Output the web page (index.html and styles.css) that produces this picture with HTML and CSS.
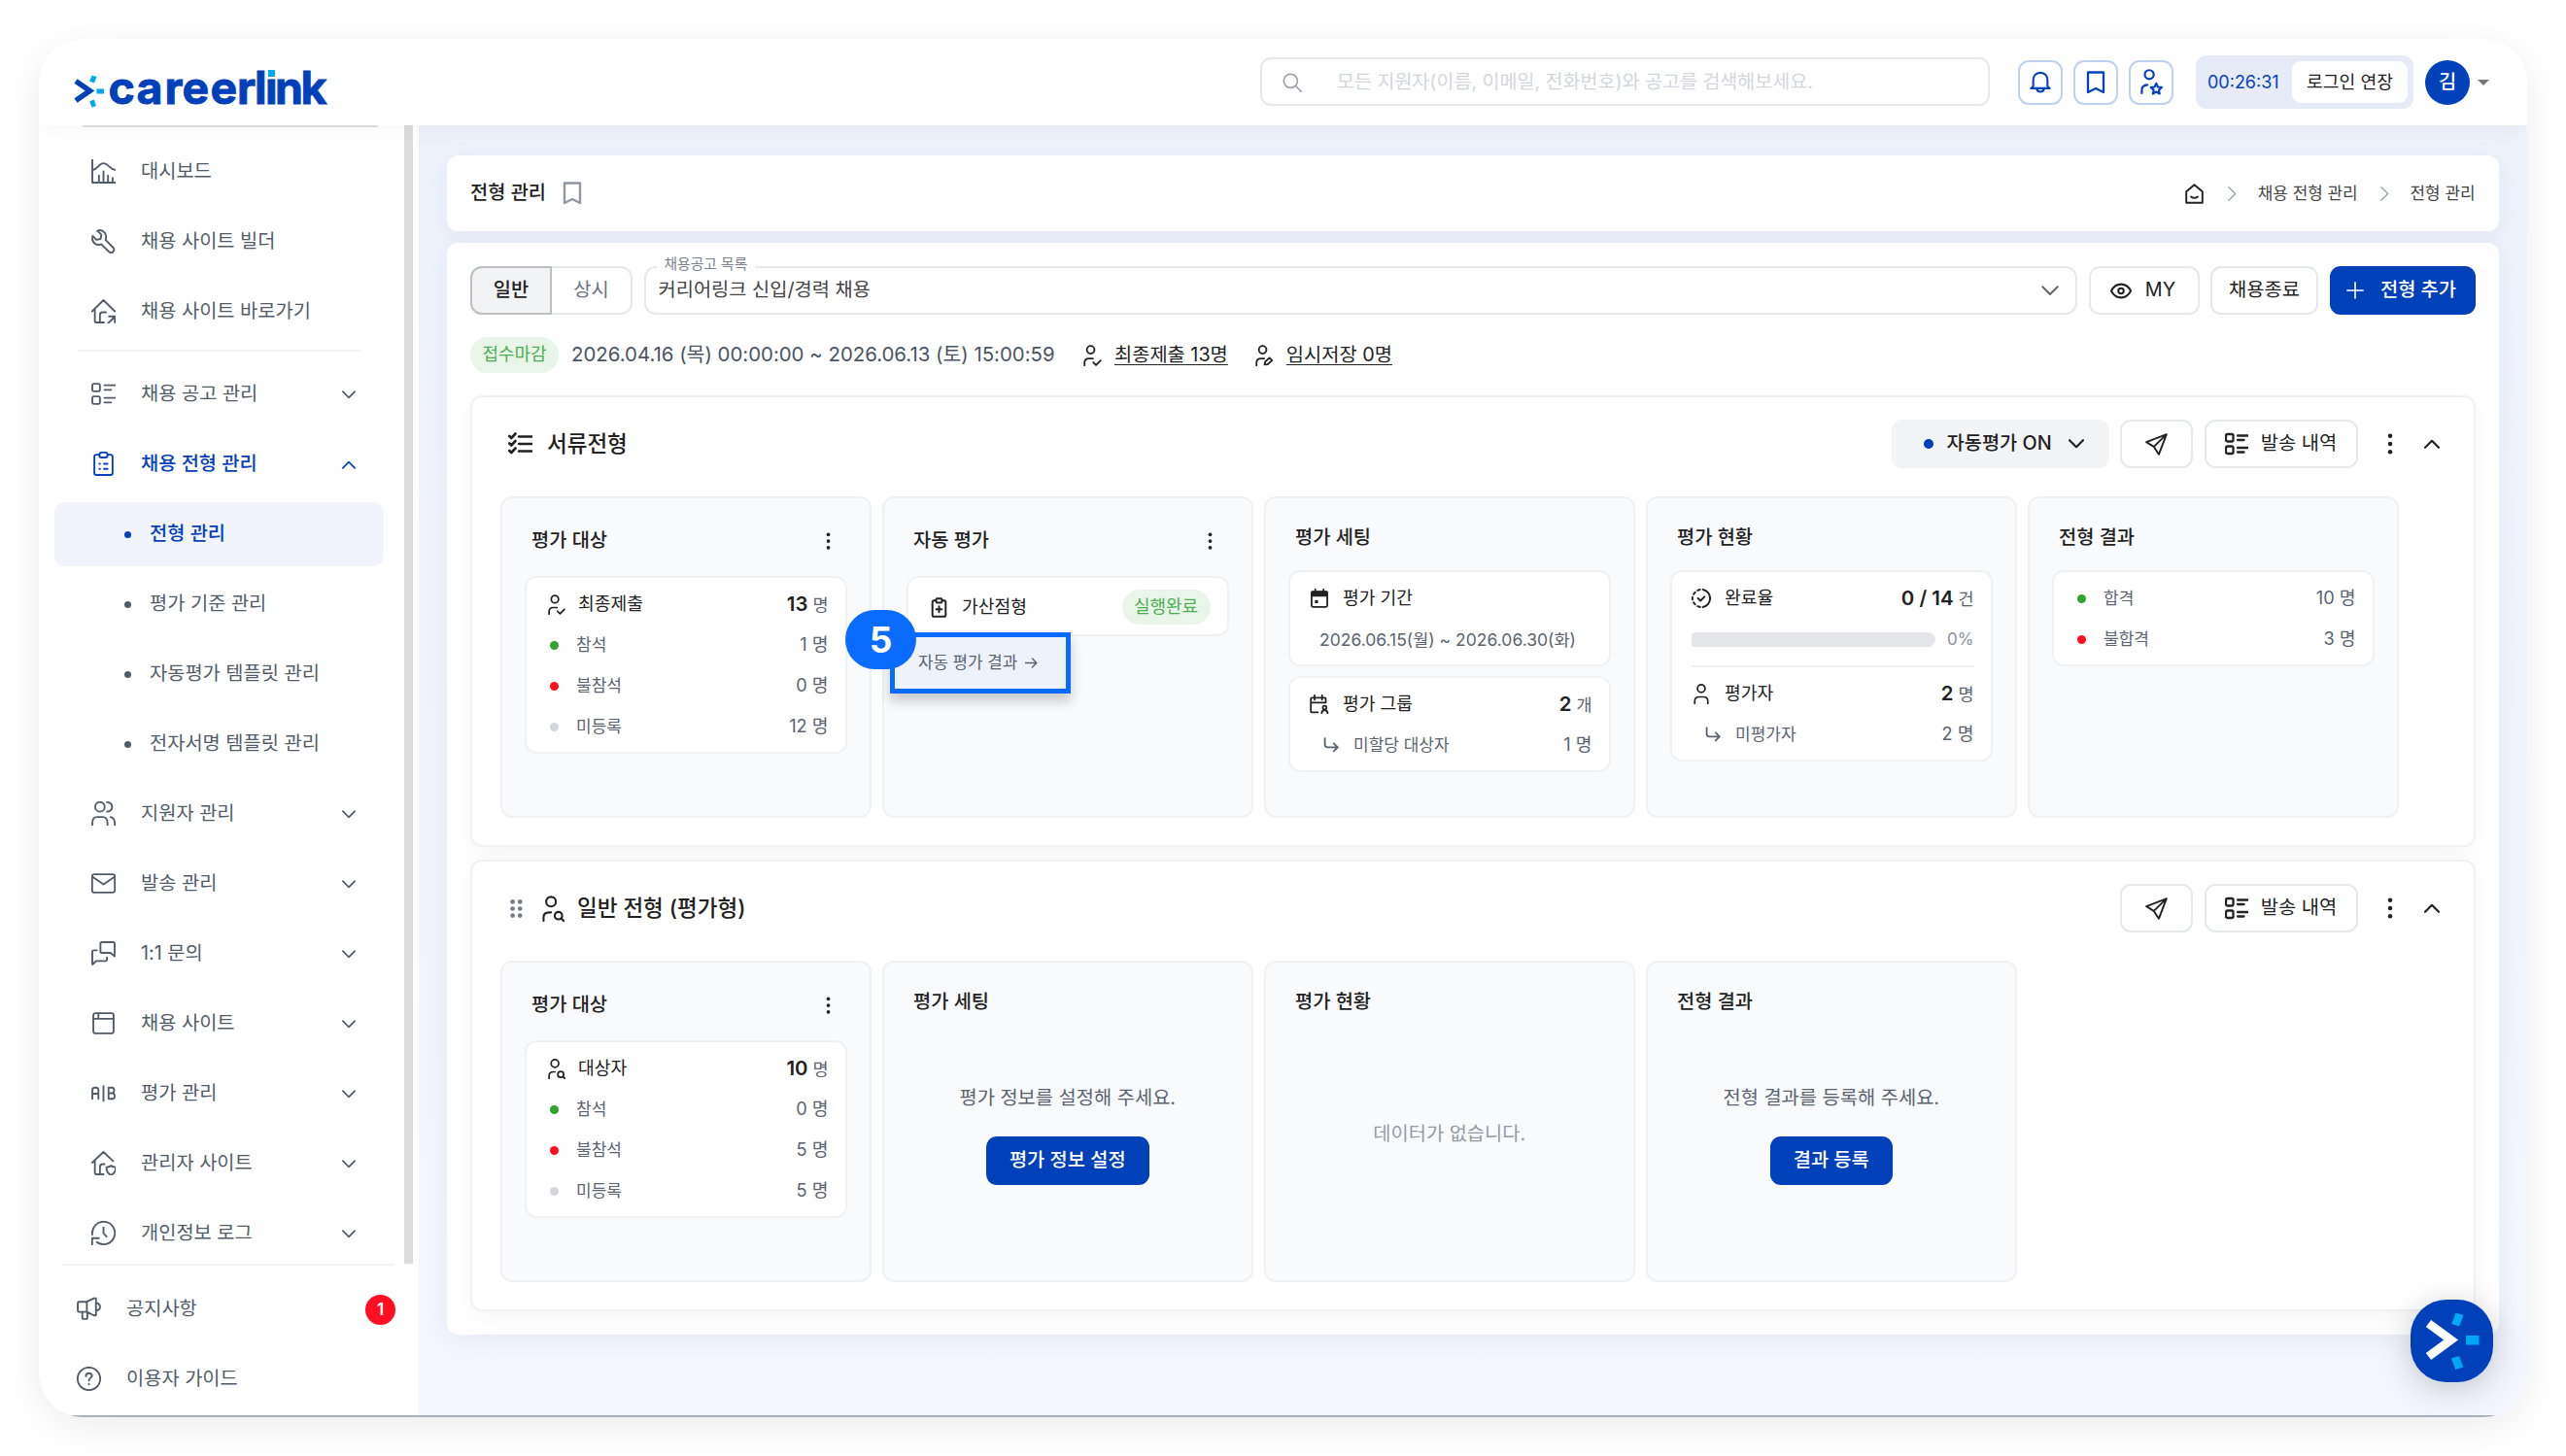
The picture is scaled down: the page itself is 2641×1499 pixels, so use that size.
FILE: index.html
```html
<!DOCTYPE html>
<html lang="ko">
<head>
<meta charset="utf-8">
<title>전형 관리 - careerlink</title>
<link rel="stylesheet" href="styles.css">
</head>
<body>
<svg class="sprite" aria-hidden="true">
  <symbol id="chart" viewBox="0 0 24 24"><path d="M1 0v23h22.500M1 10.500C6 10.500 7 4 12 4s6 6 11.500 6.500M7.500 23v-7M12 23V12M16.500 23v-7M21 23v-4.500"/></symbol>
  <symbol id="wrench" viewBox="0 0 24 24"><path d="M6 1.600l4 3.800-.8 4.200-4.200.8L1.300 6.600C.4 10.500 1.500 13 4 14.500c2 1.100 4 1.100 5.800.3l7.400 7.300c1.400 1.300 3 1.300 4.200.2 1.300-1.300 1.300-3 0-4.300L14 10.500c1-2.500.8-5-1-7.200C11.200 1.100 8.500.5 6 1.600z"/></symbol>
  <symbol id="homego" viewBox="0 0 24 24"><path d="M.8 12L12 1l11.200 11M3.500 10v11.500q0 1.500 1.500 1.500h7.500M8.500 23v-7.500q0-2.500 2.500-2.500h3.500M16.500 24l6.500-6.500M17.500 17H23.300v6"/></symbol>
  <symbol id="list" viewBox="0 0 24 24"><rect x="1" y="2" width="7.500" height="7.500" rx="1.500"/><rect x="1" y="14.500" width="7.500" height="7.500" rx="1.500"/><path d="M13 3.500h10.500M13 8h6.500M13 16h10.500M13 20.500h6.500"/></symbol>
  <symbol id="clip" viewBox="0 0 24 24"><path d="M8 3H5Q3 3 3 5v16q0 2 2 2h14q2 0 2-2V5q0-2-2-2h-3"/><rect x="8" y=".8" width="8" height="5" rx="2.300"/><path d="M8 12h.5M12.500 12H16M8 17h.5M12.500 17H16"/></symbol>
  <symbol id="users" viewBox="0 0 24 24"><circle cx="8.500" cy="5.500" r="4.700"/><path d="M1 23.500v-2Q1 15.500 6 15.500h5q5 0 5 6v2M15.500.8q5 .5 5 4.700t-5 4.700M19 15.500q4 1 4.200 6v2"/></symbol>
  <symbol id="mail" viewBox="0 0 24 24"><rect x=".8" y="3" width="22.400" height="18" rx="2"/><path d="M1.200 5.500L12 13l10.800-7.500"/></symbol>
  <symbol id="chat" viewBox="0 0 24 24"><path d="M23 15V2.500Q23 1 21.500 1h-11Q9 1 9 2.500V10q0 1.500 1.500 1.500H19zM5.500 9h-3Q1 9 1 10.500V23l4-3.500h9q1.500 0 1.500-2V16"/></symbol>
  <symbol id="window" viewBox="0 0 24 24"><rect x="2" y="2" width="20" height="20" rx="2"/><path d="M2 7.500h20M7 2v5"/></symbol>
  <symbol id="ab" viewBox="0 0 24 24"><path d="M1 17.500V9q0-2.500 2.500-2.500h1Q7 6.500 7 9v8.500M1 12.500h6M12 5v14.500M17 6.500v11h4q2 0 2-2.700T21 12h-4M17 6.500h3.500q2 0 2 2.700T20.500 12"/></symbol>
  <symbol id="homeshield" viewBox="0 0 24 24"><path d="M.8 11.500L12 1l9.500 9M3.500 10v11.500q0 1.500 1.500 1.500h7M8.500 23v-7q0-3 3-3h1.500M19.500 14.500q-2 1.300-4.500 1.500c-.2 4 1.300 6.500 4.500 7.800 3.200-1.300 4.700-3.800 4.500-7.800q-2.500-.2-4.500-1.500z"/></symbol>
  <symbol id="history" viewBox="0 0 24 24"><path d="M1 13.500A11.200 11.200 0 1 1 5.500 21M.8 23.500V17H7.500M12 6.500V12l3 3.500"/></symbol>
  <symbol id="horn" viewBox="0 0 24 24"><path d="M2.500 5H10L17 1.500h2v17h-2L10 15H2.500Q1 15 1 13.500v-7Q1 5 2.500 5zM10 5v10M5.500 15v6q0 1 1 1h3q1 0 1-1v-5.500M19 6q4 1 4 4t-4 4"/></symbol>
  <symbol id="help" viewBox="0 0 24 24"><circle cx="12" cy="12" r="11.200"/><path d="M9 9.500q0-3 3-3t3 2.700c0 2-3 2-3 4.600M12 17v.6"/></symbol>
  <symbol id="down" viewBox="0 0 16 10"><path d="M1 1.200l7 7 7-7"/></symbol>
  <symbol id="up" viewBox="0 0 16 10"><path d="M1 8.800l7-7 7 7"/></symbol>
  <symbol id="right" viewBox="0 0 10 18"><path d="M1 1.500L8.500 9 1 16.500"/></symbol>
  <symbol id="search" viewBox="0 0 24 24"><circle cx="10" cy="10" r="8.500"/><path d="M16.200 16.200L23 23"/></symbol>
  <symbol id="bell" viewBox="0 0 24 24"><path d="M1.500 19h21L20 16.500V10c0-5-3-8.500-8-8.500S4 5 4 10v6.500zM8 19.500c.3 4.500 7.700 4.500 8 0"/></symbol>
  <symbol id="mark" viewBox="0 0 20 24"><path d="M2 1.500h16V22l-8-4-8 4z"/></symbol>
  <symbol id="userstar" viewBox="0 0 24 28"><circle cx="9.500" cy="6" r="4.800"/><path d="M1.500 26v-3.500q0-5 6-5.500M17 15.500l1.800 3.700 4 .5-3 2.800.8 4-3.600-2-3.600 2 .8-4-3-2.800 4-.5z"/></symbol>
  <symbol id="usercheck" viewBox="0 0 24 28"><circle cx="9.500" cy="6.500" r="5"/><path d="M1.500 27v-3.500q0-5.500 6-5.500h5M13 23l3.500 3.500 6-6"/></symbol>
  <symbol id="useredit" viewBox="0 0 24 28"><circle cx="9.500" cy="6.500" r="5"/><path d="M1.500 27v-3.500q0-5.500 6-5.500h4M12 26l1-4 5.500-5 3.500 3.500-6 5z"/></symbol>
  <symbol id="usersearch" viewBox="0 0 24 28"><circle cx="9.500" cy="6.500" r="5.200"/><path d="M1.500 27v-3.500q0-5.500 6-5.500h2M20.500 24.500l3 3"/><circle cx="17.500" cy="21.500" r="4"/></symbol>
  <symbol id="user" viewBox="0 0 24 28"><circle cx="12" cy="6.500" r="5.200"/><path d="M3 27v-3q0-6 6-6h6q6 0 6 6v3"/></symbol>
  <symbol id="home" viewBox="0 0 24 24"><path d="M2.500 22.500V9.500L12 1.500l9.500 8v13zM8 15.500q4 3 8 0"/></symbol>
  <symbol id="eye" viewBox="0 0 24 20"><path d="M1 10q4-7.500 11-7.500T23 10q-4 7.500-11 7.500T1 10z"/><circle cx="12" cy="10" r="3"/></symbol>
  <symbol id="plus" viewBox="0 0 20 20"><path d="M10 1v18M1 10h18"/></symbol>
  <symbol id="checks" viewBox="0 0 24 24"><path d="M10.500 4.500H24M10.500 12H24M10.500 19.500H24M.8 4l2 2L7 1.500M.8 11.500l2 2L7 9M.8 19l2 2L7 16.500"/></symbol>
  <symbol id="send" viewBox="0 0 24 24"><path d="M22.800 1.200L1.200 9.500l8 5 5.300 8.300zM9.200 14.500L22.500 1.500"/></symbol>
  <symbol id="clipplus" viewBox="0 0 20 24"><path d="M6 3.500H4Q2 3.500 2 5.500V21q0 2 2 2h12q2 0 2-2V5.500q0-2-2-2h-2"/><rect x="6.500" y="1" width="7" height="5" rx="1"/><path d="M10 10.500v7M6.500 14h7"/></symbol>
  <symbol id="cal" viewBox="0 0 24 26"><rect x="1.500" y="4" width="21" height="20.500" rx="2"/><path fill="currentColor" d="M2 4.500h20v5H2zM7 16.500h2v2H7z"/><path d="M6.500 1v4M17.500 1v4"/></symbol>
  <symbol id="caluser" viewBox="0 0 26 26"><path d="M11 24H3q-1.500 0-1.500-1.500V6Q1.500 4.500 3 4.500h17q1.500 0 1.500 1.500v5M1.500 11h20M6.500 1v6M16.500 1v6M16 25.500q0-4.500 4-4.500t4 4.500"/><circle cx="20" cy="17.500" r="2.500"/></symbol>
  <symbol id="progress" viewBox="0 0 24 24"><path d="M14 1.200a11 11 0 0 1 0 21.600M10.500 22.800l-3-1M4.500 19.600l-2-2.500M1.100 13.500v-3M2.500 7l2-2.600M7.500 2.200l3-1M8 12l3 3 5-5"/></symbol>
  <symbol id="sub" viewBox="0 0 20 20"><path d="M2 1.500v8q0 3.500 3.500 3.500H18M13.500 8l5 5-5 5"/></symbol>
  <symbol id="dots" viewBox="0 0 6 24"><circle cx="3" cy="3" r="2.500"/><circle cx="3" cy="12" r="2.500"/><circle cx="3" cy="21" r="2.500"/></symbol>
  <symbol id="grip" viewBox="0 0 12 18"><circle cx="2.300" cy="2.300" r="2.200"/><circle cx="9.500" cy="2.300" r="2.200"/><circle cx="2.300" cy="9" r="2.200"/><circle cx="9.500" cy="9" r="2.200"/><circle cx="2.300" cy="15.700" r="2.200"/><circle cx="9.500" cy="15.700" r="2.200"/></symbol>
  <symbol id="arrow" viewBox="0 0 14 14"><path d="M.5 7h12M8 2.200L12.800 7 8 11.800"/></symbol>
</svg>

<div class="shell">
  <header class="header">
    <svg class="logo" viewBox="0 0 262 44" role="img" aria-label="careerlink">
      <path class="logo-arrow" d="M2 13.500L16.500 23.500 2 33.500"/>
      <path class="logo-ray" d="M18.500 7.500l5 1.500-2.500 6.500-4.800-1.700zM23.500 21.500H31v5h-7.500zM16.300 34.200l4.500-1.700 2.200 6.500-4.500 1.700z"/>
      <text class="logo-word" y="36.500" x="35.500 64.500 93.500 111.500 140.500 168 186 197 207 233.500">careerlink</text>
      <rect class="logo-dot-bg" x="198.500" y="0" width="9.500" height="10.500"/>
      <rect class="logo-ray" x="200" y="2" width="7" height="7"/>
    </svg>
    <div class="search"><svg class="i i20"><use href="#search"/></svg><span>모든 지원자(이름, 이메일, 전화번호)와 공고를 검색해보세요.</span></div>
    <div class="quick">
      <a class="qbtn"><svg class="i q1"><use href="#bell"/></svg></a>
      <a class="qbtn"><svg class="i q2"><use href="#mark"/></svg></a>
      <a class="qbtn"><svg class="i q3"><use href="#userstar"/></svg></a>
    </div>
    <div class="timer"><span class="time">00:26:31</span><span class="extend">로그인 연장</span></div>
    <div class="avatar">김</div><span class="caret"></span>
  </header>

  <div class="body">
    <aside class="side">
      <nav class="nav">
        <div class="peek"></div>
        <a class="item"><svg class="i"><use href="#chart"/></svg><span>대시보드</span></a>
        <a class="item"><svg class="i"><use href="#wrench"/></svg><span>채용 사이트 빌더</span></a>
        <a class="item"><svg class="i"><use href="#homego"/></svg><span>채용 사이트 바로가기</span></a>
        <hr class="line">
        <a class="item"><svg class="i"><use href="#list"/></svg><span>채용 공고 관리</span><svg class="chev"><use href="#down"/></svg></a>
        <a class="item on"><svg class="i"><use href="#clip"/></svg><span>채용 전형 관리</span><svg class="chev"><use href="#up"/></svg></a>
        <a class="subitem on"><b></b><span>전형 관리</span></a>
        <a class="subitem"><b></b><span>평가 기준 관리</span></a>
        <a class="subitem"><b></b><span>자동평가 템플릿 관리</span></a>
        <a class="subitem"><b></b><span>전자서명 템플릿 관리</span></a>
        <a class="item"><svg class="i"><use href="#users"/></svg><span>지원자 관리</span><svg class="chev"><use href="#down"/></svg></a>
        <a class="item"><svg class="i"><use href="#mail"/></svg><span>발송 관리</span><svg class="chev"><use href="#down"/></svg></a>
        <a class="item"><svg class="i"><use href="#chat"/></svg><span>1:1 문의</span><svg class="chev"><use href="#down"/></svg></a>
        <a class="item"><svg class="i"><use href="#window"/></svg><span>채용 사이트</span><svg class="chev"><use href="#down"/></svg></a>
        <a class="item"><svg class="i"><use href="#ab"/></svg><span>평가 관리</span><svg class="chev"><use href="#down"/></svg></a>
        <a class="item"><svg class="i"><use href="#homeshield"/></svg><span>관리자 사이트</span><svg class="chev"><use href="#down"/></svg></a>
        <a class="item"><svg class="i"><use href="#history"/></svg><span>개인정보 로그</span><svg class="chev"><use href="#down"/></svg></a>
      </nav>
      <div class="foot">
        <a class="item"><svg class="i"><use href="#horn"/></svg><span>공지사항</span><em>1</em></a>
        <a class="item"><svg class="i"><use href="#help"/></svg><span>이용자 가이드</span></a>
      </div>
    </aside>

    <main class="main">
      <section class="titlebar">
        <h1>전형 관리</h1><svg class="i tmark"><use href="#mark"/></svg>
        <div class="crumbs"><svg class="i home"><use href="#home"/></svg><svg class="i sep"><use href="#right"/></svg><span>채용 전형 관리</span><svg class="i sep"><use href="#right"/></svg><span>전형 관리</span></div>
      </section>

      <section class="content">
        <div class="tools">
          <div class="seg"><span class="sel">일반</span><span>상시</span></div>
          <div class="select"><label>채용공고 목록</label><span>커리어링크 신입/경력 채용</span><svg class="i s-chev"><use href="#down"/></svg></div>
          <a class="btn my"><svg class="i eye"><use href="#eye"/></svg>MY</a>
          <a class="btn end">채용종료</a>
          <a class="btn primary add"><svg class="i plus"><use href="#plus"/></svg>전형 추가</a>
        </div>
        <div class="meta">
          <span class="badge">접수마감</span>
          <span class="period">2026.04.16 (목) 00:00:00 ~ 2026.06.13 (토) 15:00:59</span>
          <svg class="i mu1"><use href="#usercheck"/></svg><a class="u">최종제출 13명</a>
          <svg class="i mu2"><use href="#useredit"/></svg><a class="u">임시저장 0명</a>
        </div>

        <article class="stage">
          <div class="head">
            <svg class="i h1i"><use href="#checks"/></svg><h2>서류전형</h2>
            <div class="acts">
              <a class="auto"><b></b>자동평가 ON<svg class="i c16"><use href="#down"/></svg></a>
              <a class="btn send"><svg class="i"><use href="#send"/></svg></a>
              <a class="btn log"><svg class="i"><use href="#list"/></svg>발송 내역</a>
              <svg class="dots"><use href="#dots"/></svg><svg class="i c16"><use href="#up"/></svg>
            </div>
          </div>
          <div class="cols">
            <div class="col menu">
              <div class="ct"><h3>평가 대상</h3><svg class="dots sm"><use href="#dots"/></svg></div>
              <div class="box">
                <div class="row main-row"><svg class="i pi"><use href="#usercheck"/></svg><span>최종제출</span><p><strong>13</strong> 명</p></div>
                <div class="row"><b class="green"></b><span>참석</span><p>1 명</p></div>
                <div class="row"><b class="red"></b><span>불참석</span><p>0 명</p></div>
                <div class="row"><b class="gray"></b><span>미등록</span><p>12 명</p></div>
              </div>
            </div>
            <div class="col menu">
              <div class="ct"><h3>자동 평가</h3><svg class="dots sm"><use href="#dots"/></svg></div>
              <div class="box one">
                <div class="row main-row"><svg class="i cp"><use href="#clipplus"/></svg><span>가산점형</span><i class="badge">실행완료</i></div>
              </div>
              <a class="result">자동 평가 결과<svg class="i ar"><use href="#arrow"/></svg></a>
              <span class="step">5</span>
            </div>
            <div class="col">
              <div class="ct"><h3>평가 세팅</h3></div>
              <div class="box">
                <div class="row main-row"><svg class="i cal"><use href="#cal"/></svg><span>평가 기간</span></div>
                <div class="row range">2026.06.15(월) ~ 2026.06.30(화)</div>
              </div>
              <div class="box">
                <div class="row main-row"><svg class="i cu"><use href="#caluser"/></svg><span>평가 그룹</span><p><strong>2</strong> 개</p></div>
                <div class="row nested"><svg class="i"><use href="#sub"/></svg><span>미할당 대상자</span><p>1 명</p></div>
              </div>
            </div>
            <div class="col">
              <div class="ct"><h3>평가 현황</h3></div>
              <div class="box">
                <div class="row main-row"><svg class="i pg"><use href="#progress"/></svg><span>완료율</span><p><strong>0 / 14</strong> 건</p></div>
                <div class="row bar"><div class="track"></div><small>0%</small></div>
                <hr>
                <div class="row main-row"><svg class="i us"><use href="#user"/></svg><span>평가자</span><p><strong>2</strong> 명</p></div>
                <div class="row nested"><svg class="i"><use href="#sub"/></svg><span>미평가자</span><p>2 명</p></div>
              </div>
            </div>
            <div class="col">
              <div class="ct"><h3>전형 결과</h3></div>
              <div class="box">
                <div class="row"><b class="green"></b><span>합격</span><p>10 명</p></div>
                <div class="row"><b class="red"></b><span>불합격</span><p>3 명</p></div>
              </div>
            </div>
          </div>
        </article>

        <article class="stage">
          <div class="head">
            <svg class="grip"><use href="#grip"/></svg><svg class="i h2i"><use href="#usersearch"/></svg><h2>일반 전형 (평가형)</h2>
            <div class="acts">
              <a class="btn send"><svg class="i"><use href="#send"/></svg></a>
              <a class="btn log"><svg class="i"><use href="#list"/></svg>발송 내역</a>
              <svg class="dots"><use href="#dots"/></svg><svg class="i c16"><use href="#up"/></svg>
            </div>
          </div>
          <div class="cols">
            <div class="col menu">
              <div class="ct"><h3>평가 대상</h3><svg class="dots sm"><use href="#dots"/></svg></div>
              <div class="box">
                <div class="row main-row"><svg class="i pi"><use href="#usersearch"/></svg><span>대상자</span><p><strong>10</strong> 명</p></div>
                <div class="row"><b class="green"></b><span>참석</span><p>0 명</p></div>
                <div class="row"><b class="red"></b><span>불참석</span><p>5 명</p></div>
                <div class="row"><b class="gray"></b><span>미등록</span><p>5 명</p></div>
              </div>
            </div>
            <div class="col">
              <div class="ct"><h3>평가 세팅</h3></div>
              <div class="empty"><span>평가 정보를 설정해 주세요.</span><a class="btn primary">평가 정보 설정</a></div>
            </div>
            <div class="col">
              <div class="ct"><h3>평가 현황</h3></div>
              <div class="empty muted"><span>데이터가 없습니다.</span></div>
            </div>
            <div class="col">
              <div class="ct"><h3>전형 결과</h3></div>
              <div class="empty"><span>전형 결과를 등록해 주세요.</span><a class="btn primary">결과 등록</a></div>
            </div>
          </div>
        </article>
      </section>
    </main>
  </div>
  <a class="fab"><svg viewBox="0 0 85 85"><path class="fab-arrow" d="M18.500 24.500L41.500 41.500 18.500 58.500"/><path class="logo-ray" d="M46.500 13.500l8 2.500-4.300 11.500-8-2.500zM57 37h13.500v9.500H57zM42 60.500l8-2.500 4.300 11.500-8 2.500z"/></svg></a>
</div>
</body>
</html>
```
FILE: styles.css
```css
* { box-sizing: border-box; }

body {
  margin: 0;
  width: 2641px;
  height: 1499px;
  overflow: hidden;
  background: #fff;
  font-family: Inter, "Noto Sans CJK KR", sans-serif;
  font-size: 19.8px;
  line-height: 1.2;
  color: #222;
  white-space: nowrap;
}

h1, h2, h3, p, hr { margin: 0; border: 0; font-size: inherit; font-weight: 500; }
i, em { font-style: normal; }
a { color: inherit; }

.sprite { display: none; }

svg { flex: none; overflow: visible; }
.i, .chev { fill: none; stroke: currentColor; stroke-width: 1.8; stroke-linecap: round; stroke-linejoin: round; }

.shell {
  position: relative;
  display: flex;
  flex-direction: column;
  width: 2561px;
  height: 1419px;
  margin: 40px;
  border-radius: 46px;
  overflow: hidden;
  background: #fff;
}
.shell::after {
  content: "";
  position: absolute;
  left: 0;
  right: 0;
  bottom: 0;
  height: 2px;
  background: #a9b0bd;
}

body::before {
  content: "";
  position: absolute;
  left: 40px;
  top: 40px;
  width: 2561px;
  height: 1418px;
  border-radius: 46px;
  box-shadow: 0 10px 44px rgba(0, 0, 0, .08);
}

/* header */
.header {
  position: relative;
  z-index: 2;
  display: flex;
  flex: none;
  align-items: center;
  height: 89px;
  padding: 0 38px 0 36px;
  background: #fff;
  box-shadow: 0 4px 24px rgba(0, 0, 0, .04);
}
.logo { width: 262px; height: 44px; margin-top: 14px; }
.logo-arrow { fill: none; stroke: #0040b8; stroke-width: 5.500; }
.logo-ray { fill: #00a8f5; }
.logo-word { font-weight: 700; font-size: 46.500px; fill: #0040b8; stroke: #0040b8; stroke-width: .9; }
.logo-dot-bg { fill: #fff; }

.search {
  display: flex;
  align-items: center;
  gap: 36px;
  width: 751px;
  height: 50px;
  margin: -1px 0 0 959px;
  padding: 1px 0 0 21px;
  border: 2px solid #e6e8ec;
  border-radius: 11px;
  color: #d3d6dc;
  font-size: 19.550px;
}
.i20 { width: 20px; height: 20px; color: #9aa1ac; stroke-width: 2; }
.quick { display: flex; gap: 11px; margin-left: 29px; }
.qbtn {
  display: flex;
  align-items: center;
  justify-content: center;
  width: 46px;
  height: 46px;
  border: 2px solid #bfd0ee;
  border-radius: 11px;
  color: #0541bc;
}
.q1 { width: 22px; height: 25px; stroke-width: 2.300; }
.q2 { width: 20px; height: 24px; stroke-width: 2.300; }
.q3 { width: 23px; height: 27px; stroke-width: 2.300; }
.timer {
  display: flex;
  align-items: center;
  justify-content: space-between;
  width: 224px;
  height: 55px;
  margin-left: 23px;
  padding: 0 6px 0 12px;
  border-radius: 11px;
  background: #e6ebf7;
}
.time { color: #0541bc; font-size: 18px; }
.extend {
  width: 119px;
  height: 43px;
  line-height: 42px;
  text-align: center;
  border-radius: 9px;
  background: #fff;
  font-size: 18.200px;
}
.avatar {
  width: 46px;
  height: 46px;
  margin-left: 12px;
  border-radius: 50%;
  background: #0040b8;
  color: #fff;
  font-weight: 500;
  line-height: 44px;
  text-align: center;
}
.caret { margin-left: 8px; border: 6.500px solid transparent; border-top-color: #757575; border-bottom: 0; }

/* sidebar */
.body { display: flex; flex: 1; min-height: 0; }
.side { display: flex; flex: none; flex-direction: column; width: 391px; color: #525c69; background: #fff; }
.nav {
  display: flex;
  flex-direction: column;
  flex: none;
  height: 1172px;
  margin-right: 6px;
  border-right: 9px solid #dcdcdc;
  overflow: hidden;
}
.nav > * { flex: none; }
.peek { width: 304px; height: 12px; margin: 0 0 0 45px; background: linear-gradient(#dfe0e2 2px, transparent 2px); }
.item { display: flex; align-items: center; height: 72px; padding-left: 54px; }
.item .i { width: 25px; height: 25px; margin: -1px 26px 0 0; }
.chev { width: 14px; height: 9px; margin-left: auto; margin-right: 50px; stroke-width: 2; }
.line { width: 291px; height: 2px; margin: 3px 0 8px 40px; background: #f3f4f5; }
.on { color: #0541bc; font-weight: 500; }
.subitem { display: flex; align-items: center; height: 66px; margin: 3px 0 3px 16px; width: 339px; padding-left: 72px; border-radius: 11px; }
.subitem b { width: 7px; height: 7px; margin-right: 19px; border-radius: 50%; background: currentColor; }
.subitem.on { background: #f1f4fc; }
.foot { position: relative; flex: 1; }
.foot::before { content: ""; display: block; width: 342px; height: 2px; margin: 0 0 9px 24px; background: #f5f5f6; }
.foot .item { padding-left: 39px; }
.foot em {
  width: 31px;
  height: 31px;
  margin-left: auto;
  margin-right: 24px;
  border-radius: 50%;
  background: #ff1020;
  color: #fff;
  font-size: 17px;
  font-weight: 600;
  line-height: 30px;
  text-align: center;
}

/* main */
.main {
  flex: 1;
  padding: 31px 29.500px 0 29px;
  background: linear-gradient(#eef2fb, #f3f6fe);
}
.titlebar {
  display: flex;
  align-items: center;
  height: 78px;
  margin-bottom: 12px;
  padding: 0 24px;
  border-radius: 12px;
  background: #fff;
  box-shadow: 0 4px 26px rgba(40, 50, 90, .06);
}
.titlebar h1 { font-weight: 500; }
.tmark { width: 20px; height: 24px; margin-left: 17px; color: #9096a2; stroke-width: 2.400; }
.crumbs { display: flex; align-items: center; margin-left: auto; font-size: 16.900px; color: #444; }
.home { width: 21px; height: 21px; color: #222; stroke-width: 2.200; }
.sep { width: 9px; height: 17px; margin: 0 22px 0 23px; color: #9aa1ac; stroke-width: 1.500; }
.home + .sep { margin-left: 24px; }

.content {
  height: 1124px;
  padding: 24px;
  border-radius: 12px;
  background: #fff;
  box-shadow: 0 4px 26px rgba(40, 50, 90, .06);
}
.tools { display: flex; gap: 11.500px; height: 50px; }
.seg { display: flex; width: 167px; border: 2px solid #e6e8ec; border-radius: 12px; color: #6b7280; line-height: 45px; text-align: center; }
.seg span { flex: 1; }
.seg .sel { flex: none; width: 84px; margin: -2px 0 -2px -2px; border: 2px solid #bdbfc2; border-radius: 12px 0 0 12px; background: #f2f3f5; color: #222; font-weight: 500; }
.select { position: relative; display: flex; flex: 1; align-items: center; justify-content: space-between; padding: 0 17px 0 13px; border: 2px solid #e6e8ec; border-radius: 12px; color: #444; }
.select label { position: absolute; left: 11px; top: -12px; padding: 0 8px; background: #fff; color: #7b828e; font-size: 14.800px; }
.s-chev { width: 18px; height: 11px; color: #666; }

.btn {
  display: flex;
  align-items: center;
  justify-content: center;
  height: 50px;
  border: 2px solid #e6e8ec;
  border-radius: 11px;
  background: #fff;
}
.my { width: 114px; gap: 14px; padding-right: 2px; }
.eye { width: 22px; height: 19px; stroke-width: 2.200; }
.end { width: 111px; }
.btn.primary { border: 0; background: #0040b8; color: #fff; font-weight: 500; }
.add { width: 150px; gap: 17px; padding-right: 2px; }
.plus { width: 18px; height: 18px; }

.meta { display: flex; align-items: center; height: 37px; margin: 23px 0; }
.badge { width: 91px; height: 37px; border-radius: 18px; background: #e9f5e9; color: #4caf50; font-size: 18px; line-height: 36px; text-align: center; }
.period { width: 499px; margin: 0 28px 0 13px; color: #4b5563; font-size: 20.400px; }
.mu1 { width: 19px; height: 22px; margin-right: 13px; stroke-width: 2.300; }
.mu2 { width: 19px; height: 22px; margin: 0 13px 0 28px; stroke-width: 2.300; }
.u { text-decoration: underline; text-underline-offset: 3px; text-decoration-thickness: 1px; }

.stage {
  height: 465px;
  margin-bottom: 13px;
  padding: 23px 29px 0;
  border: 2px solid #f0f1f3;
  border-radius: 12px;
  background: #fff;
  box-shadow: 0 6px 26px rgba(0, 0, 0, .045);
}
.head { display: flex; align-items: center; height: 50px; margin-bottom: 29px; padding: 0 6px 0 8px; }
.head h2 { font-size: 22.500px; font-weight: 500; margin-top: -1px; }
.h1i { width: 25px; height: 24px; margin-right: 15px; stroke-width: 2.600; }
.grip { width: 13px; height: 19px; margin: 0 20px 0 2px; fill: #747a88; }
.h2i { width: 23px; height: 27px; margin-right: 13px; stroke-width: 2.200; }
.acts { display: flex; align-items: center; gap: 11.500px; margin-left: auto; }
.auto { display: flex; align-items: center; width: 224px; height: 50px; padding-left: 33px; border-radius: 11px; background: #f2f4f6; font-weight: 500; }
.auto b { width: 10px; height: 10px; margin-right: 14px; border-radius: 50%; background: #0040b8; }
.auto .c16 { margin-left: 17px; }
.c16 { width: 16px; height: 10px; stroke-width: 2.200; }
.send { width: 75px; }
.send .i { width: 23px; height: 23px; stroke-width: 2; }
.log { width: 158px; gap: 13px; }
.log .i { width: 24px; height: 24px; stroke-width: 2.300; }
.dots { width: 6px; height: 22px; margin: 0 20px 0 19px; fill: #222; }

.cols { display: grid; grid-template-columns: repeat(5, 381.500px); gap: 11.500px; }
.col { position: relative; height: 331px; padding: 0 23px; border: 2px solid #eff1f4; border-radius: 12px; background: #f9fafc; }
.ct { display: flex; align-items: center; justify-content: space-between; height: 74px; padding: 8px 17px 0 7px; }
.ct h3 { font-weight: 500; }
.menu .ct { height: 80px; }
.dots.sm { width: 5px; height: 18px; margin: -1px 0 0; }
.box { margin-bottom: 10px; padding: 6px 17px 5px 20px; border: 2px solid #eff1f4; border-radius: 12px; background: #fff; }
.row { display: flex; align-items: center; height: 42px; padding-left: 2px; color: #5b6470; font-size: 17px; }
.row p { margin-left: auto; font-weight: 400; font-size: 18.200px; }
.row strong { color: #222; font-size: 20.400px; font-weight: 600; }
.row b { width: 9px; height: 9px; margin: 0 18px 0 2px; border-radius: 50%; }
.row.main-row { padding-left: 0; font-size: 18.200px; }
.main-row > span { color: #222; }
.main-row .i { width: 20px; height: 20px; margin-right: 14px; color: #222; stroke-width: 2.300; }
.main-row p { font-size: 17.500px; }
.main-row .pi { width: 18px; height: 21px; margin: 0 13px 0 2px; }
.main-row .us { height: 21px; }
.main-row .cp { width: 17px; height: 21px; margin: 0 15px 0 3px; }
.green { background: #2fa52f; }
.red { background: #ff1020; }
.gray { background: #d3d7dc; }
.one { padding: 9px 17px 9px 20px; margin: 0; height: 62px; }
.one .badge { margin-left: auto; height: 36px; line-height: 35px; }
.range { padding-left: 10px; font-size: 17.500px; }
.nested { padding-left: 14px; }
.nested .i { width: 16px; height: 16px; margin-right: 15px; stroke-width: 2.300; }
.row.bar { padding-left: 0; }
.track { flex: 1; height: 15px; margin-right: 12px; border-radius: 4px 8px 8px 4px; background: #e4e6ea; }
.bar small { font-size: 17px; color: #8a909c; }
.box hr { height: 2px; margin: 6px 0; background: #f0f1f3; }

/* highlighted step callout */
.result {
  position: absolute;
  left: 6px;
  top: 138px;
  display: flex;
  align-items: center;
  gap: 8px;
  width: 186px;
  height: 63px;
  padding-left: 24px;
  border: 5px solid #0a6cff;
  background: #edf2fb;
  box-shadow: 0 8px 12px rgba(0, 0, 0, .2);
  color: #5b6470;
  font-size: 16.800px;
}
.ar { width: 13px; height: 13px; stroke-width: 1.500; }
.step {
  position: absolute;
  left: -40px;
  top: 115px;
  width: 73px;
  height: 61px;
  border-radius: 31px;
  background: #0a6cff;
  color: #fff;
  font-size: 37px;
  font-weight: 700;
  line-height: 61px;
  text-align: center;
}

.empty { display: flex; flex-direction: column; align-items: center; gap: 27px; padding-top: 54px; color: #5b6470; }
.empty .btn { padding: 0 24px; }
.muted { padding-top: 91px; color: #949aa5; }

.fab { position: absolute; z-index: 3; left: 2441px; top: 1298px; width: 85px; height: 85px; border-radius: 37px; background: #0040b8; box-shadow: 0 6px 34px rgba(0, 0, 0, .2); }
.fab svg { display: block; width: 85px; height: 85px; }
.fab-arrow { fill: none; stroke: #fff; stroke-width: 9; }
```
